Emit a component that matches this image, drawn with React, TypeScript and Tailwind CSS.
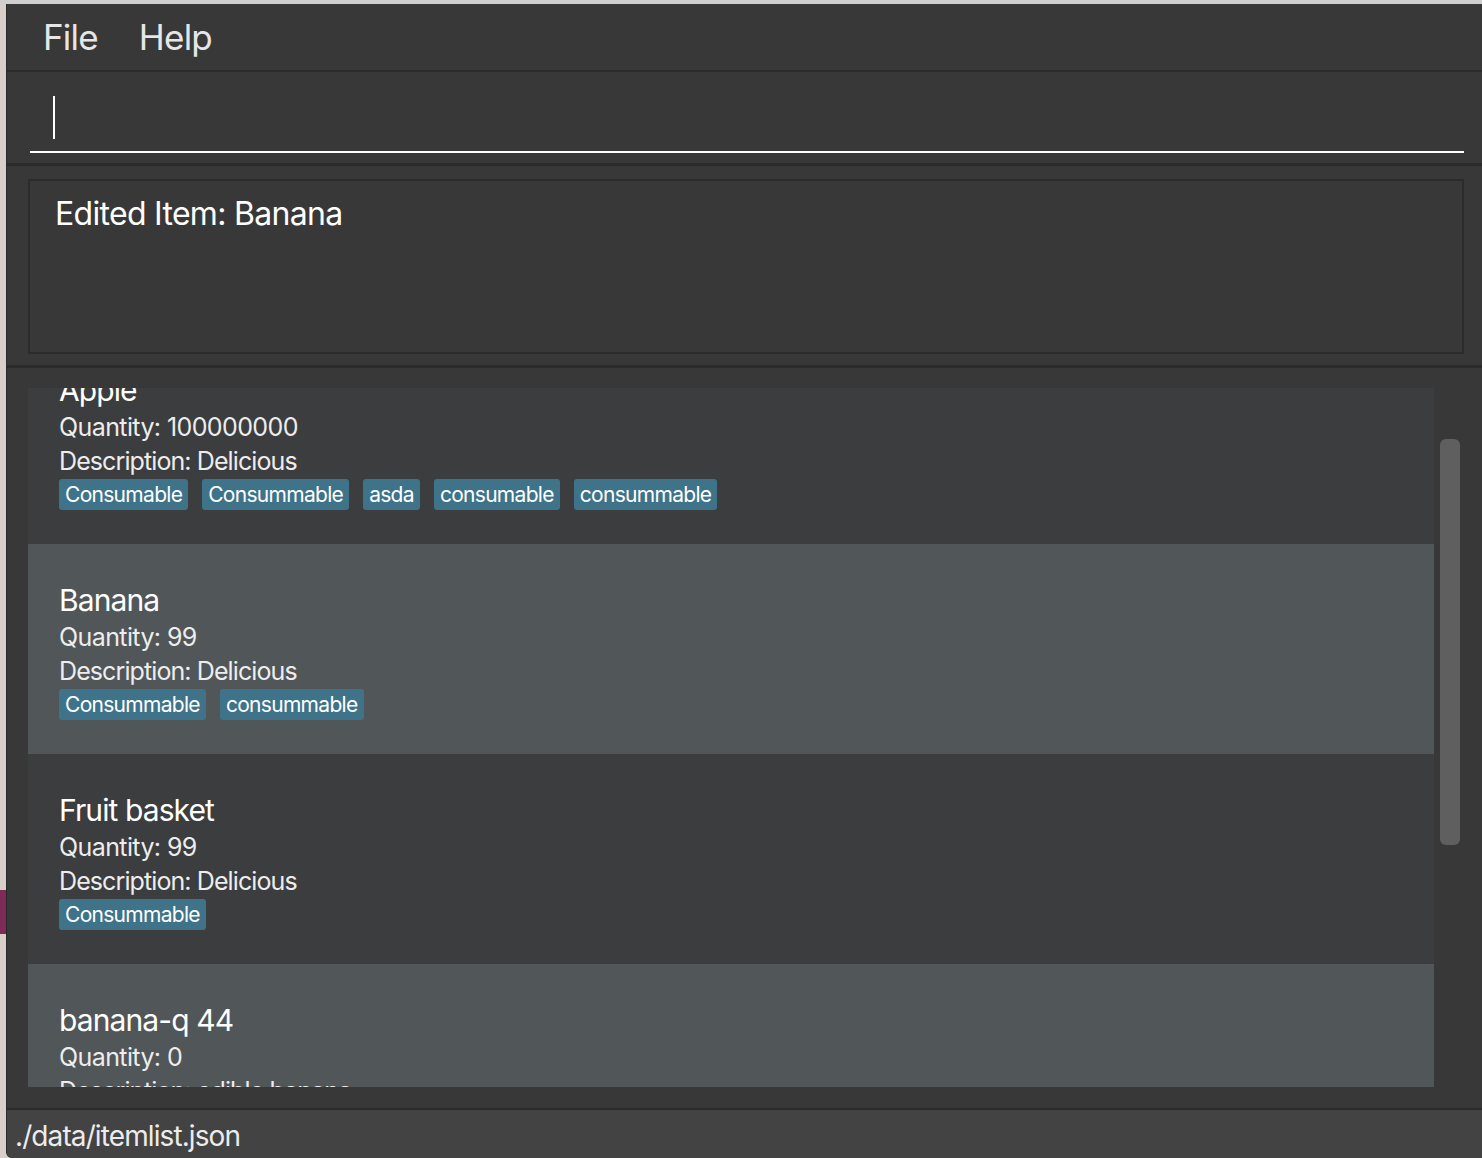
const font = { fontFamily: 'Inter, "Liberation Sans", sans-serif' };

type Item = { name: string; quantity: string; description: string; tags: string[] };

const items: Item[] = [
  { name: 'Apple', quantity: '100000000', description: 'Delicious', tags: ['Consumable', 'Consummable', 'asda', 'consumable', 'consummable'] },
  { name: 'Banana', quantity: '99', description: 'Delicious', tags: ['Consummable', 'consummable'] },
  { name: 'Fruit basket', quantity: '99', description: 'Delicious', tags: ['Consummable'] },
  { name: 'banana-q 44', quantity: '0', description: 'edible banana', tags: [] },
];

const ItemCard = ({ item, index }: { item: Item; index: number }) => (
  <div
    className={`h-[210px] shrink-0 pl-[31px] pt-[36px] text-[#ededed] ${index % 2 === 0 ? 'bg-[#3c3d3f]' : 'bg-[#515658]'} ${index === 0 ? 'mt-[-54px]' : ''}`}
  >
    <div className="text-[30px] leading-[40px] tracking-[-0.9px] text-white">{item.name}</div>
    <div className="text-[25px] leading-[34px] tracking-[-0.6px]">Quantity: {item.quantity}</div>
    <div className="text-[25px] leading-[34px] tracking-[-0.9px]">Description: {item.description}</div>
    <div className="mt-[1px] flex gap-[14px]">
      {item.tags.map((t, i) => (
        <span
          key={i}
          className="h-[31px] rounded-[3px] bg-[#3e7389] px-[6px] text-[21px] leading-[31px] tracking-[-0.7px] text-white"
        >
          {t}
        </span>
      ))}
    </div>
  </div>
);

export default function App() {
  return (
    <div className="flex h-[1158px] w-[1482px] flex-col overflow-hidden bg-[#d9d0cc]" style={font}>
      <div className="h-[4px] shrink-0 bg-[#cfcfcf]" />
      <div className="flex min-h-0 flex-1">
        <div className="flex w-[6px] shrink-0 flex-col bg-[#d8cfcb]">
          <div className="mt-[886px] h-[44px] bg-[#7e2c57]" />
        </div>
        <div className="flex min-w-0 flex-1 flex-col overflow-hidden rounded-bl-[6px] border-l border-[#2a2a2a] bg-[#383838]">
          {/* menu */}
          <div className="flex h-[66px] shrink-0 items-center gap-[41px] pl-[36px] text-[35px] tracking-[-0.8px] text-[#e6e6e6]">
            <span>File</span>
            <span>Help</span>
          </div>
          <div className="h-[2px] shrink-0 bg-[#2b2b2b]" />
          {/* command box */}
          <div className="relative h-[91px] shrink-0">
            <div className="absolute left-[46px] top-[24px] h-[43px] w-[2px] bg-white" />
            <div className="absolute bottom-[10px] left-[23px] right-[18px] h-[2px] bg-white" />
          </div>
          <div className="h-[3px] shrink-0 bg-[#2b2b2b]" />
          {/* result */}
          <div className="h-[199px] shrink-0 pl-[21px] pr-[18px] pt-[13px]">
            <div className="h-[175px] border-2 border-[#2b2b2b] pl-[25px] pt-[13px] text-[32px] leading-[40px] tracking-[-0.7px] text-white">
              Edited Item: Banana
            </div>
          </div>
          <div className="h-[3px] shrink-0 bg-[#2b2b2b]" />
          {/* list */}
          <div className="relative flex h-[740px] shrink-0 pb-[21px] pl-[21px] pr-[48px] pt-[20px]">
            <div className="flex flex-1 flex-col overflow-hidden">
              {items.map((it, i) => (
                <ItemCard key={i} item={it} index={i} />
              ))}
            </div>
            <div className="absolute right-[22px] top-[71px] h-[406px] w-[20px] rounded-[6px] bg-[#5f5f5f]" />
          </div>
          <div className="h-[2px] shrink-0 bg-[#2b2b2b]" />
          {/* status */}
          <div className="flex flex-1 items-center bg-[#434343] pl-[8px] pt-[4px] text-[28px] tracking-[-0.9px] text-[#ececec]">
            ./data/itemlist.json
          </div>
        </div>
      </div>
    </div>
  );
}
